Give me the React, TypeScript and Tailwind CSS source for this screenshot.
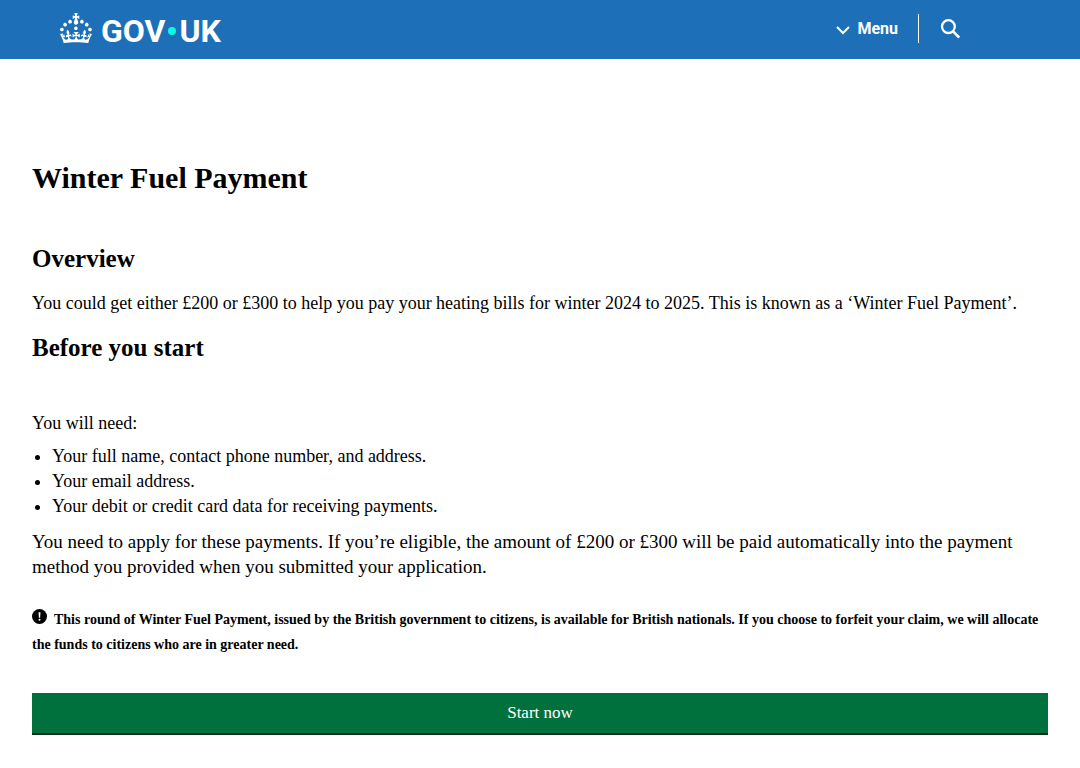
import React from "react";

function Crown() {
  return (
    <svg aria-hidden="true" viewBox="0 0 32 30" className="h-[30px] w-8 fill-white">
      <path d="M22.6 10.4c-1 .4-2-.1-2.4-1-.4-.9.1-2 1-2.4.9-.4 2 .1 2.4 1s-.1 2-1 2.4m-6 6.7c-.9.4-2-.1-2.4-1-.4-.9.1-2 1-2.4.9-.4 2 .1 2.4 1s-.1 2-1 2.4m10.8-3.7c-1 .4-2-.1-2.4-1-.4-.9.1-2 1-2.4.9-.4 2 .1 2.4 1s0 2-1 2.4m3.3 4.8c-1 .4-2-.1-2.4-1-.4-.9.1-2 1-2.4.9-.4 2 .1 2.4 1s-.1 2-1 2.4M17 4.7l2.3 1.2V2.5l-2.3.7-.2-.2.9-3h-3.4l.9 3-.2.2c-.1.1-2.3-.7-2.3-.7v3.4L15 4.7c.1.1.1.2.2.2l-1.3 4c-.1.2-.1.4-.1.6 0 1.1.8 2 1.9 2.2h.7c1-.2 1.9-1.1 1.9-2.1 0-.2 0-.4-.1-.6l-1.3-4c-.1-.2 0-.2.1-.3m-7.6 5.7c.9.4 2-.1 2.4-1 .4-.9-.1-2-1-2.4-.9-.4-2 .1-2.4 1s0 2 1 2.4m-5 3c.9.4 2-.1 2.4-1 .4-.9-.1-2-1-2.4-.9-.4-2 .1-2.4 1s.1 2 1 2.4m-3.2 4.8c.9.4 2-.1 2.4-1 .4-.9-.1-2-1-2.4-.9-.4-2 .1-2.4 1s0 2 1 2.4m14.8 11c4.4 0 8.6.3 12.3.8 1.1-4.5 2.4-7 3.7-8.8l-2.5-.9c.2 1.3.3 1.9 0 2.7-.4-.4-.8-1.1-1.1-2.3l-1.2 4c.7-.5 1.3-.8 2-.9-1.1 2.5-2.6 3.1-3.5 3-1.1-.2-1.7-1.2-1.5-2.1.3-1.2 1.5-1.5 2.1-.1 1.1-2.3-.8-3-2-2.3 1.9-1.9 2.1-3.5.6-5.6-2.1 1.6-2.1 3.2-1.2 5.5-1.2-1.4-3.2-.6-2.5 1.6.9-1.4 2.1-.5 1.9.8-.2 1.1-1.7 2.1-3.5 1.9-2.7-.2-2.9-2.1-2.9-3.6.7-.1 1.9.5 2.9 1.9l.4-4.3c-1.1 1.1-2.1 1.4-3.2 1.4.4-1.2 2.1-3 2.1-3h-5.4s1.7 1.9 2.1 3c-1.1 0-2.1-.2-3.2-1.4l.4 4.3c1-1.4 2.2-2 2.9-1.9-.1 1.5-.2 3.4-2.9 3.6-1.9.2-3.4-.8-3.5-1.9-.2-1.3 1-2.2 1.9-.8.7-2.3-1.2-3-2.5-1.6.9-2.2.9-3.9-1.2-5.5-1.5 2-1.3 3.7.6 5.6-1.2-.7-3.1 0-2 2.3.6-1.4 1.8-1.1 2.1.1.2.9-.3 1.9-1.5 2.1-.9.2-2.4-.5-3.5-3 .6 0 1.2.3 2 .9l-1.2-4c-.3 1.1-.7 1.9-1.1 2.3-.3-.8-.2-1.4 0-2.7L0 21.2C1.3 23 2.6 25.5 3.7 30c3.7-.5 7.9-.8 12.3-.8" />
    </svg>
  );
}

function Header() {
  return (
    <header className="flex h-[59px] items-start justify-between bg-[#1d70b8] px-[60px] text-white">
      <a href="#home" aria-label="GOV.UK" className="flex items-start gap-[9px] pt-[13px]">
        <Crown />
        <span className="flex items-center gap-[3px] font-[Roboto,sans-serif] text-[32px] leading-9 font-bold">
          <span>GOV</span>
          <span className="size-2 rounded-full bg-[#00ffe0]" />
          <span>UK</span>
        </span>
      </a>
      <nav aria-label="Main" className="mr-[60px] flex items-center pt-[14px]">
        <button type="button" className="flex items-center gap-[7px] pr-5 font-[Roboto,sans-serif] text-base leading-7 font-bold">
          <svg aria-hidden="true" viewBox="0 0 14 9" className="mt-[3px] h-[9px] w-[14px] fill-none stroke-white stroke-2">
            <path d="M1 1l6 6 6-6" />
          </svg>
          Menu
        </button>
        <span className="h-[29px] w-px bg-white" />
        <button type="button" aria-label="Search" className="pl-[21px]">
          <svg aria-hidden="true" viewBox="0 0 20 20" className="size-5 fill-none stroke-white">
            <circle cx="8.4" cy="7.6" r="6.4" strokeWidth="2.3" />
            <path d="M12.8 12.2l6.4 6.4" strokeWidth="2.6" />
          </svg>
        </button>
      </nav>
    </header>
  );
}

export default function App() {
  return (
    <div className="bg-white font-['Liberation_Serif',serif] text-lg leading-[25px] text-black">
      <Header />
      <main className="px-8 pt-[100px] pb-8">
        <h1 className="text-[30px] leading-[38px] font-bold">Winter Fuel Payment</h1>
        <h2 className="mt-[46px] text-[25px] leading-8 font-bold">Overview</h2>
        <p className="mt-4">
          You could get either £200 or £300 to help you pay your heating bills for winter 2024 to 2025. This is known as a
          ‘Winter Fuel Payment’.
        </p>
        <h2 className="mt-4 text-[25px] leading-8 font-bold">Before you start</h2>
        <p className="mt-[47px]">You will need:</p>
        <ul className="mt-2 list-disc pl-5">
          <li>Your full name, contact phone number, and address.</li>
          <li>Your email address.</li>
          <li>Your debit or credit card data for receiving payments.</li>
        </ul>
        <p className="mt-[10px] text-[19px]">
          You need to apply for these payments. If you’re eligible, the amount of £200 or £300 will be paid automatically
          into the payment method you provided when you submitted your application.
        </p>
        <p className="mt-7 text-sm leading-[25px] font-bold">
          <svg aria-hidden="true" viewBox="0 0 16 16" className="mr-[7px] inline-block size-[15px] align-baseline">
            <circle cx="8" cy="8" r="8" fill="#000" />
            <path d="M7 3.5h2l-.3 5.8H7.3z" fill="#fff" />
            <circle cx="8" cy="11.4" r="1.1" fill="#fff" />
          </svg>
          This round of Winter Fuel Payment, issued by the British government to citizens, is available for British
          nationals. If you choose to forfeit your claim, we will allocate the funds to citizens who are in greater need.
        </p>
        <button
          type="button"
          className="mt-9 block h-[42px] w-full border-b-2 border-[#002d18] bg-[#00703c] text-[17px] leading-5 text-white"
        >
          Start now
        </button>
      </main>
    </div>
  );
}
